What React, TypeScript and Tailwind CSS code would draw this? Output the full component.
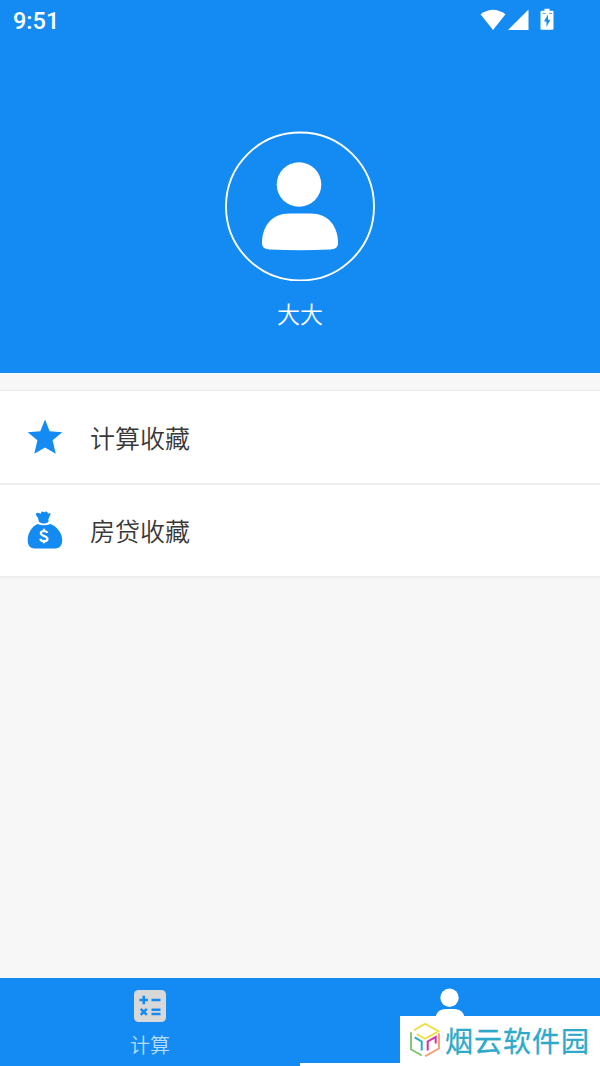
const cjk = "font-['Noto_Sans_CJK_SC',sans-serif]";

const StatusBar = () => (
  <div className="flex h-10 items-center justify-between pl-[13px] pr-[46px] text-white">
    <span className="pt-1 font-[Roboto,sans-serif] text-[23.5px] font-medium leading-none">9:51</span>
    <svg width="74" height="24" viewBox="0 0 74 24" fill="#fff" className="shrink-0">
      <path d="M0.5 6.2Q13 -2.8 25.5 6.2L13 22Z" />
      <path d="M48.5 1.5V22H28Z" />
      <path d="M64.5 .8h5v2h3q1 0 1 1v17q0 1-1 1h-11q-1 0-1-1V3.8q0-1 1-1h3Z" />
      <path d="M68 6.5L64 13.5H66.5V19L70.2 11.8H68Z" fill="#148bf3" />
      <path d="M62.5 5.4h3M69 5.4h3" stroke="#148bf3" strokeWidth="0.8" />
    </svg>
  </div>
);

const Avatar = () => (
  <svg width="150" height="150" viewBox="0 0 150 150" className="shrink-0">
    <circle cx="75" cy="75.5" r="74" fill="none" stroke="#fff" strokeWidth="1.9" />
    <circle cx="74" cy="53.5" r="22.3" fill="#fff" />
    <path d="M65 82.5H85C104 82.5 113 96 113 112C113 117 110 118 105 118.5Q75 120 45 118.5C40 118 37 117 37 112C37 96 46 82.5 65 82.5Z" fill="#fff" />
  </svg>
);

const StarIcon = () => (
  <svg width="36" height="38" viewBox="0 0 36 38" fill="#148bf3">
    <path d="M18 1.5L22.7 13.3L35.3 14.2L25.6 22.3L28.7 35.8L18 29.6L7.3 35.8L10.4 22.3L.7 14.2L13.3 13.3Z" />
  </svg>
);

const MoneyBagIcon = () => (
  <svg width="36" height="38" viewBox="0 0 36 38" fill="#148bf3" className="mb-0.5">
    <path d="M12 11Q11.5 6.5 8.8 3.8Q8.3 2 10.5 1.7Q12.5 1.7 13.5 3Q14.2 .2 16 .6Q17.3 1.8 18.6 .6Q20.4 .2 21.2 3Q22.3 1.7 23.4 2Q24 3 22.4 5.5Q21 8 21.4 11Q17 14 12 11Z" />
    <path d="M10.5 13Q17 15.5 23.5 13C29 15 35.2 21.5 35.2 29C35.2 36 31.5 37.5 26 37.5H9.8C4 37.5 .7 36 .7 29C.7 21.5 5.5 15 10.5 13Z" />
    <path d="M20.3 22Q19.6 20 17 20Q13.8 20.1 13.8 22.3C13.8 25.4 20.5 24.5 20.5 27.9Q20.4 30.2 17 30.2Q13.9 30.2 13.3 27.7M17 17.8V20M17 30V32.3" fill="none" stroke="#fff" strokeWidth="2.2" />
  </svg>
);

const CalcIcon = () => (
  <svg width="34" height="34" viewBox="0 0 34 34">
    <rect x="1" y="1" width="32" height="32" rx="4.5" fill="#d8d8d8" />
    <path d="M6.5 11H15M10.75 6.8V15.2M18.5 11H27.5M7.7 19.8L13.8 25.8M13.8 19.8L7.7 25.8M18.5 20.7H27.5M18.5 25H27.5" stroke="#148bf3" strokeWidth="2.5" />
  </svg>
);

const UserIcon = () => (
  <svg width="34" height="36" viewBox="0 0 34 36" fill="#fff">
    <circle cx="16.5" cy="9.7" r="9.2" />
    <path d="M13 21H21C29 21 32 26.5 32 33Q32 35 29 35H5Q2 35 2 33C2 26.5 5 21 13 21Z" />
  </svg>
);

const CubeLogo = () => (
  <svg width="32" height="36" viewBox="0 0 32 36" fill="none" strokeWidth="1.8" className="mb-0.5 shrink-0">
    <path d="M5 8.2L16 1.8L29.5 9.3L16 16.7L7.7 12" stroke="#ecdf3c" />
    <path d="M2 10.3V27.3L12.7 33.5" stroke="#79c267" />
    <path d="M5.7 15.3L12.7 19.5V28.5" stroke="#2aa9c8" strokeWidth="2" />
    <path d="M18.7 28.5V19.5L26.7 15V21.5" stroke="#d5309c" strokeWidth="2" />
    <path d="M30 11.3V26.5L16 34.3" stroke="#f49a6c" />
  </svg>
);

const items = [
  { label: "计算收藏", icon: <StarIcon /> },
  { label: "房贷收藏", icon: <MoneyBagIcon /> },
];

const App = () => {
  return (
    <main className={`relative flex h-[1066px] w-[600px] flex-col overflow-hidden bg-[#f7f7f7] ${cjk}`}>
      <header className="flex h-[373px] shrink-0 flex-col bg-[#148bf3]">
        <StatusBar />
        <div className="flex flex-col items-center pt-[91px]">
          <Avatar />
          <p className="mt-[15px] text-[23px] font-[350] leading-[34px] text-white">大大</p>
        </div>
      </header>

      <section className="mt-[17px] border-y border-[#ebebeb] bg-white shadow-[0_1px_2px_rgba(0,0,0,0.04)]">
        {items.map((item) => (
          <div key={item.label} className="flex h-[94px] items-center border-b-2 border-[#ededed] pl-[27px] text-[25px] font-[350] text-[#383838] last:h-[91px] last:border-b-0">
            {item.icon}
            <span className="ml-[27px] pt-px">{item.label}</span>
          </div>
        ))}
      </section>

      <nav className="mt-auto flex h-[88px] shrink-0 bg-[#148bf3]">
        <button className="flex flex-1 flex-col items-center pt-[11px] text-[#b9dcfb]">
          <CalcIcon />
          <span className="mt-[7px] text-[20px] font-[350] leading-[30px]">计算</span>
        </button>
        <button className="flex flex-1 flex-col items-center border-b-[3px] border-white pt-2.5">
          <UserIcon />
        </button>
      </nav>

      <div className="absolute bottom-0 right-0 flex h-[50px] w-[200px] items-center bg-white pl-[9px]">
        <CubeLogo />
        <span className="-mt-0.5 ml-1 whitespace-nowrap text-[28px] leading-none tracking-[1px] text-[#2fa9ca] [-webkit-text-stroke:0.3px_#2fa9ca]">烟云软件园</span>
      </div>
    </main>
  );
};

export default App;
